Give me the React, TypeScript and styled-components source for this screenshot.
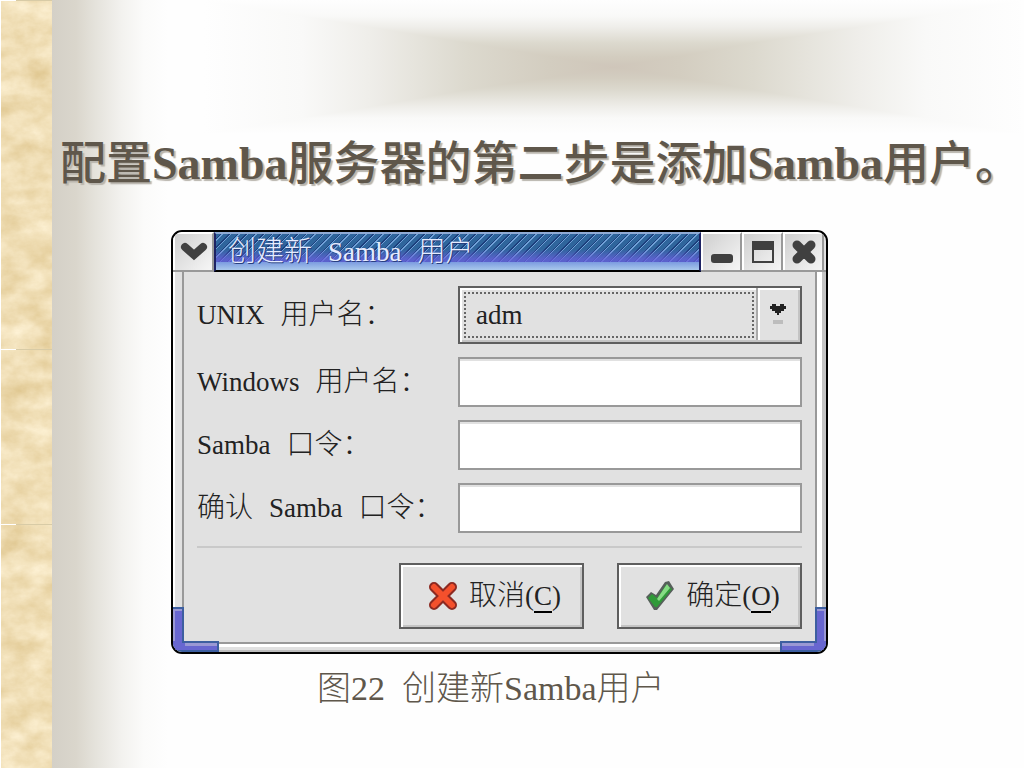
import React from "react";
import styled, { createGlobalStyle } from "styled-components";

const Global = createGlobalStyle`
  *, *::before, *::after { box-sizing: border-box; }
  body { margin: 0; background: #fefefe; }
  body, button, input, select {
    font-family: "Liberation Serif", "Noto Sans CJK SC", serif;
    font-weight: 300;
  }
`;

const Slide = styled.div`
  display: flex;
  min-height: 100vh;
`;

const Parchment = styled.aside`
  position: relative;
  display: flex;
  flex-direction: column;
  flex: 0 0 52px;
  padding-left: 1px;
  background: #efdcb2;
`;

const Texture = styled.svg`
  position: absolute;
  inset: 0;
  width: 100%;
  height: 100%;
`;

const Sheet = styled.div<{ $size?: number }>`
  position: relative;
  flex: ${(p) => (p.$size ? `0 0 ${p.$size}px` : "1 0 auto")};
  border-top: 1px solid #d8cba6;

  &::before {
    content: "";
    position: absolute;
    top: -1px;
    left: 0;
    width: 15px;
    height: 1px;
    background: #fff;
  }
`;

const Page = styled.main`
  flex: 1;
  min-width: 0;
  background: linear-gradient(
    to right,
    #d4d0c7 0,
    #dad6cc 24px,
    #e5e3dc 44px,
    #f3f2ef 70px,
    #fbfbfa 92px,
    #fefefe 116px
  );
`;

const Glow = styled.div`
  --fade: #fefefe, #f9f9f8 12%, #efeeea 20%, #dcd9ce 32%, #d3cdc0 42%, #cfc6ba 50%, #d3cdc0 58%, #dcd9ce 67%, #efeeea 80%, #f9f9f8 88%, #fefefe;
  height: 134px;
  margin: 0 0 0 152px;
  background:
    linear-gradient(to right, var(--fade)),
    linear-gradient(to bottom, var(--fade));
  background-blend-mode: lighten;
`;

const Title = styled.h1`
  margin: 0;
  padding-left: 8px;
  font-size: 46px;
  line-height: 60px;
  font-weight: 500;
  color: #5f574b;
  text-shadow: 2px 2px 1px #b9b5ad;
  white-space: nowrap;
`;

const Latin = styled.span`
  font-weight: bold;
`;

const Figure = styled.figure`
  max-width: 657px;
  margin: 36px 24px 0 119px;
`;

const Caption = styled.figcaption`
  padding: 14px 0 0 146px;
  font-size: 34px;
  line-height: 42px;
  color: #5f574b;
  white-space: pre;
`;

const Dialog = styled.section`
  position: relative;
  border: 2px solid #000;
  border-radius: 11px;
  background: #e1e1e1;
  overflow: hidden;
`;

const TitleBar = styled.header`
  display: flex;
  height: 40px;
  padding-right: 2px;
  border-bottom: 2px solid #999;
`;

const BarButton = styled.button`
  display: flex;
  align-items: center;
  justify-content: center;
  width: 41px;
  height: 38px;
  padding: 0;
  border: 0;
  border-top: 2px solid #fff;
  border-left: 2px solid #fff;
  border-right: 2px solid #999;
  background: linear-gradient(135deg, #cfcfcf, #f6f6f6);
  color: #404040;
`;

const BarTitle = styled.h2`
  flex: 1;
  display: flex;
  align-items: center;
  gap: 16px;
  height: 40px;
  margin: 0;
  padding-left: 12px;
  border: 2px solid #1d2263;
  border-top-color: #8fabd6;
  border-bottom-color: #000;
  background:
    linear-gradient(to bottom, transparent 28px, #7b9be0 28px, #a9c8ec 36px),
    linear-gradient(to bottom, transparent 15px, rgba(104, 96, 220, 0.75) 25px),
    repeating-linear-gradient(135deg, #2f659c 0 3px, #1c3f7c 3px 4px, #6fa0d6 4px 5px, #2f659c 5px 6px);
  font-size: 27px;
  line-height: 32px;
  font-weight: 300;
  color: #e6ecff;
  text-shadow: 1px 1px 0 #27407f;
`;

const Cjk = styled.span`
  font-size: 28px;
`;

const Frame = styled.div`
  padding: 0 9px;
  border-bottom: 2px solid #bdbdbd;
  background: linear-gradient(to right, #fff 0 2px, #e1e1e1 2px calc(100% - 9px), #fff calc(100% - 9px) calc(100% - 4px), #c4c4c4 calc(100% - 4px));
`;

const Form = styled.form`
  padding: 14px 13px 13px;
  border: 2px solid #999;
  border-top: 0;
  background: #e1e1e1;
`;

const BottomRail = styled.div`
  height: 6px;
  border-top: 3px solid #fff;
  background: #e1e1e1;
`;

const Field = styled.div`
  display: flex;
  align-items: center;
  margin-bottom: 13px;
`;

const Label = styled.label`
  flex: 0 0 261px;
  display: flex;
  align-items: baseline;
  gap: 16px;
  font-size: 27px;
  line-height: 32px;
  color: #222;
  white-space: nowrap;
`;

const TextBox = styled.input`
  flex: 1;
  min-width: 0;
  height: 50px;
  padding: 0 12px;
  border: 2px solid #999;
  border-radius: 0;
  background: #fff;
  font-size: 27px;
  box-shadow: inset 0 2px 0 #e1e1e1;
`;

const Combo = styled.div`
  position: relative;
  flex: 1;
  min-width: 0;
  height: 58px;
  border: 2px solid #5e5e5e;
  box-shadow: inset 2px 2px 0 #fff, inset -2px -2px 0 #c4c4c4;

  &::before {
    content: "";
    position: absolute;
    inset: 4px 46px 4px 4px;
    border: 2px dotted #666;
    pointer-events: none;
  }
`;

const Select = styled.select`
  appearance: none;
  width: 100%;
  height: 100%;
  padding: 0 48px 0 16px;
  border: 0;
  background: transparent;
  font-size: 27px;
  color: #222;
`;

const ComboArrow = styled.span`
  position: absolute;
  top: 0;
  right: 2px;
  bottom: 2px;
  width: 42px;
  display: flex;
  align-items: center;
  justify-content: center;
  border-left: 2px solid #aaa;
  box-shadow: inset 2px 2px 0 #fff;
  pointer-events: none;
`;

const Actions = styled.div`
  display: flex;
  justify-content: flex-end;
  gap: 33px;
  padding-top: 15px;
  border-top: 2px solid #c9c9c9;
`;

const Action = styled.button`
  display: flex;
  align-items: center;
  justify-content: center;
  gap: 11px;
  width: 185px;
  height: 66px;
  padding: 0 0 0 6px;
  border: 2px solid #5e5e5e;
  background: #e1e1e1;
  box-shadow: inset 2px 2px 0 #fff, inset -2px -2px 0 #c4c4c4;
  font-size: 27px;
  line-height: 32px;
  color: #222;
`;

const Key = styled.u`
  text-decoration: none;
  border-bottom: 2px solid #000;
`;

const Corner = styled.svg<{ $right?: boolean }>`
  position: absolute;
  bottom: 0;
  ${(p) => (p.$right ? "right: 0; transform: scaleX(-1);" : "left: 0;")}
  width: 46px;
  height: 45px;
`;

function CornerPiece({ right }: { right?: boolean }) {
  return (
    <Corner $right={right} viewBox="0 0 46 45" aria-hidden="true">
      <path d="M0 0H11V34H46V45H0Z" fill="#3d5fa0" />
      <path d="M0 2H9V36H44V43H0Z" fill="#6866d0" />
      <path d="M0 2H9V4H2V34H0ZM12 36H44V39H12Z" fill="#9a98d4" />
    </Corner>
  );
}

const textFields = [
  { id: "windows-name", type: "text", label: <>Windows <Cjk>用户名：</Cjk></> },
  { id: "samba-password", type: "password", label: <>Samba <Cjk>口令：</Cjk></> },
  { id: "samba-confirm", type: "password", label: <><Cjk>确认</Cjk> Samba <Cjk>口令：</Cjk></> },
];

export default function App() {
  return (
    <>
      <Global />
      <Slide lang="zh-CN">
        <Parchment aria-hidden="true">
          <Texture>
            <filter id="parchment" x="0" y="0" width="100%" height="100%" colorInterpolationFilters="sRGB">
              <feTurbulence type="fractalNoise" baseFrequency="0.035 0.05" numOctaves="5" seed="8" />
              <feColorMatrix values="0.14 0 0 0 0.87  0.2 0 0 0 0.77  0.32 0 0 0 0.55  0 0 0 0 1" />
            </filter>
            <rect x="1" width="51" height="100%" filter="url(#parchment)" />
            <rect width="1" height="100%" fill="#fff" />
          </Texture>
          <Sheet $size={349} />
          <Sheet $size={175} />
          <Sheet />
        </Parchment>
        <Page>
          <Glow />
          <Title>配置<Latin>Samba</Latin>服务器的第二步是添加<Latin>Samba</Latin>用户。</Title>
          <Figure>
            <Dialog aria-label="创建新 Samba 用户">
              <TitleBar>
                <BarButton type="button" aria-label="菜单">
                  <svg width="28" height="20" viewBox="0 0 28 20">
                    <path d="M5 5L14 13L23 5" fill="none" stroke="currentColor" strokeWidth="8" strokeLinecap="round" />
                  </svg>
                </BarButton>
                <BarTitle><Cjk>创建新</Cjk> Samba <Cjk>用户</Cjk></BarTitle>
                <BarButton type="button" aria-label="最小化">
                  <svg width="24" height="24" viewBox="0 0 24 24">
                    <rect x="1" y="14" width="22" height="9" rx="3" fill="currentColor" />
                  </svg>
                </BarButton>
                <BarButton type="button" aria-label="最大化">
                  <svg width="22" height="22" viewBox="0 0 22 22">
                    <path d="M0 0H22V22H0ZM2 9V20H20V9Z" fill="currentColor" fillRule="evenodd" />
                  </svg>
                </BarButton>
                <BarButton type="button" aria-label="关闭">
                  <svg width="24" height="24" viewBox="0 0 24 24">
                    <path d="M5 5L19 19M19 5L5 19" fill="none" stroke="currentColor" strokeWidth="9" strokeLinecap="round" />
                  </svg>
                </BarButton>
              </TitleBar>
              <Frame>
                <Form onSubmit={(e) => e.preventDefault()}>
                  <Field>
                    <Label htmlFor="unix-name">UNIX <Cjk>用户名：</Cjk></Label>
                    <Combo>
                      <Select id="unix-name" defaultValue="adm">
                        <option>adm</option>
                      </Select>
                      <ComboArrow>
                        <svg width="16" height="20" viewBox="0 0 16 20">
                          <path d="M2 0H6V2H10V0H14V2H16V5H14V7H11V9H9V11H7V9H5V7H2V5H0V2H2Z" fill="#222" />
                          <rect x="3" y="16" width="10" height="4" fill="#bdbdbd" />
                        </svg>
                      </ComboArrow>
                    </Combo>
                  </Field>
                  {textFields.map((f) => (
                    <Field key={f.id}>
                      <Label htmlFor={f.id}>{f.label}</Label>
                      <TextBox id={f.id} type={f.type} />
                    </Field>
                  ))}
                  <Actions>
                    <Action type="button">
                      <svg width="30" height="30" viewBox="0 0 30 30">
                        <path d="M6 6L24 24M24 6L6 24" stroke="#8c2a22" strokeWidth="10" strokeLinecap="round" />
                        <path d="M6 6L24 24M24 6L6 24" stroke="#f4502c" strokeWidth="6" strokeLinecap="round" />
                      </svg>
                      <span><Cjk>取消</Cjk>(<Key>C</Key>)</span>
                    </Action>
                    <Action type="submit">
                      <svg width="30" height="32" viewBox="0 0 30 32">
                        <path d="M1 17L6 12L11 15L20 2L24 1L29 9L12 30L9 30Z" fill="#56605a" />
                        <path d="M3 18L7 14L12 18L21 5L27 9L12 27L10 27Z" fill="#2f9a38" />
                        <path d="M12 19L22 4L25 8L14 21Z" fill="#86dc84" />
                      </svg>
                      <span><Cjk>确定</Cjk>(<Key>O</Key>)</span>
                    </Action>
                  </Actions>
                </Form>
                <BottomRail />
              </Frame>
              <CornerPiece />
              <CornerPiece right />
            </Dialog>
            <Caption>图22  创建新Samba用户</Caption>
          </Figure>
        </Page>
      </Slide>
    </>
  );
}
